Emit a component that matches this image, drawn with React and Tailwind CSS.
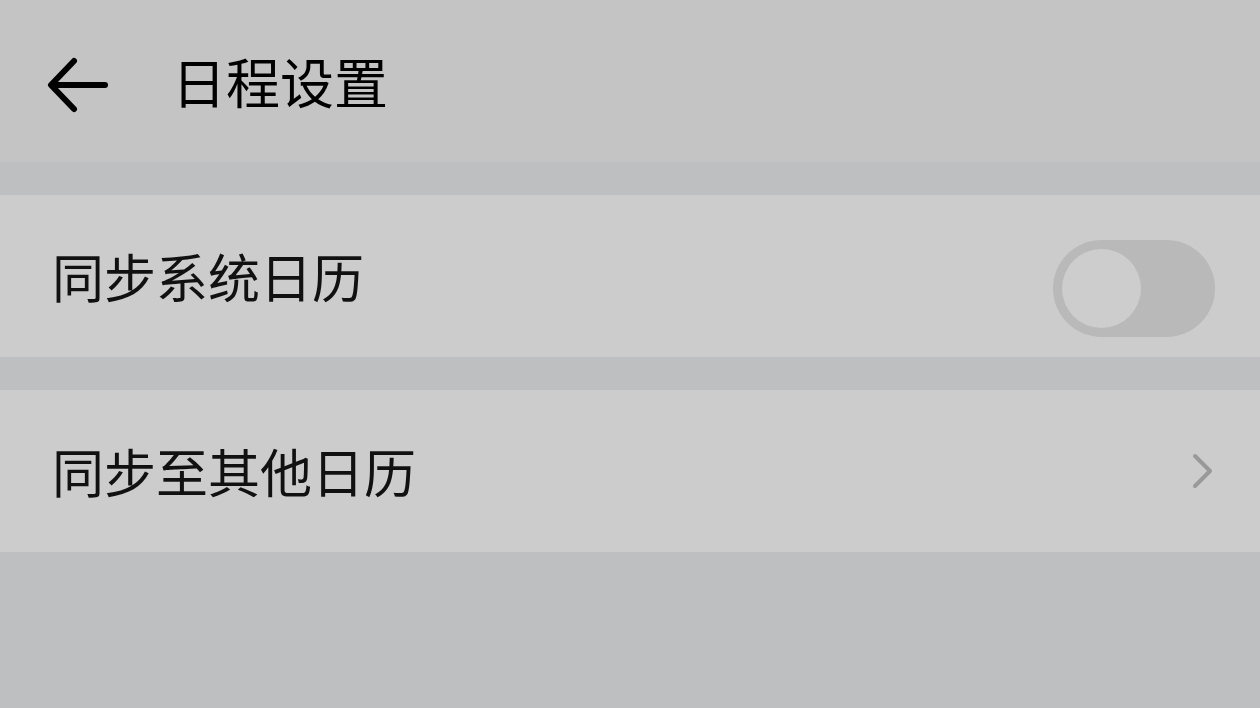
import React, { useState } from 'react';

const CJK = { fontFamily: '"Noto Sans CJK SC", "Noto Sans", sans-serif' };

const Toggle = ({ on, onChange }) => (
    <button
        onClick={() => onChange(!on)}
        className={`mt-[25px] w-[162px] h-[97px] rounded-full p-[9px] flex items-center ${on ? 'bg-[#8fb3d9] justify-end' : 'bg-[#b9b9b9] justify-start'}`}
    >
        <span className="block w-[79px] h-[79px] rounded-full bg-[#cdcdcd]" />
    </button>
);

const App = () => {
    const [sync, setSync] = useState(false);

    return (
        <div className="w-[1260px] h-[708px] bg-[#bebfc1] flex flex-col text-black" style={CJK}>
            {/* header */}
            <header className="h-[162px] bg-[#c4c4c4] flex items-center">
                <button className="ml-[46px] mt-[8px] w-[64px] h-[64px] flex items-center justify-center">
                    <svg width="64" height="64" viewBox="0 0 64 64" fill="none" stroke="#000" strokeWidth="6" strokeLinecap="round" strokeLinejoin="round">
                        <path d="M59 32H6" />
                        <path d="M28 8L5 32l23 24" />
                    </svg>
                </button>
                <h1 className="ml-[62px] text-[54px] leading-none font-normal">日程设置</h1>
            </header>

            <div className="h-[33px]" />

            <div className="h-[162px] bg-[#cccccc] flex items-center justify-between pl-[52px] pr-[45px]">
                <span className="text-[52px] leading-none text-[#111]">同步系统日历</span>
                <Toggle on={sync} onChange={setSync} />
            </div>

            <div className="h-[33px]" />

            <div className="h-[162px] bg-[#cccccc] flex items-center justify-between pl-[52px] pr-[46px]">
                <span className="text-[52px] leading-none text-[#111]">同步至其他日历</span>
                <svg width="22" height="36" viewBox="0 0 22 36" fill="none" stroke="#999" strokeWidth="4" strokeLinecap="round" strokeLinejoin="round">
                    <path d="M3 3l15 15L3 33" />
                </svg>
            </div>
        </div>
    );
};

export default App;
